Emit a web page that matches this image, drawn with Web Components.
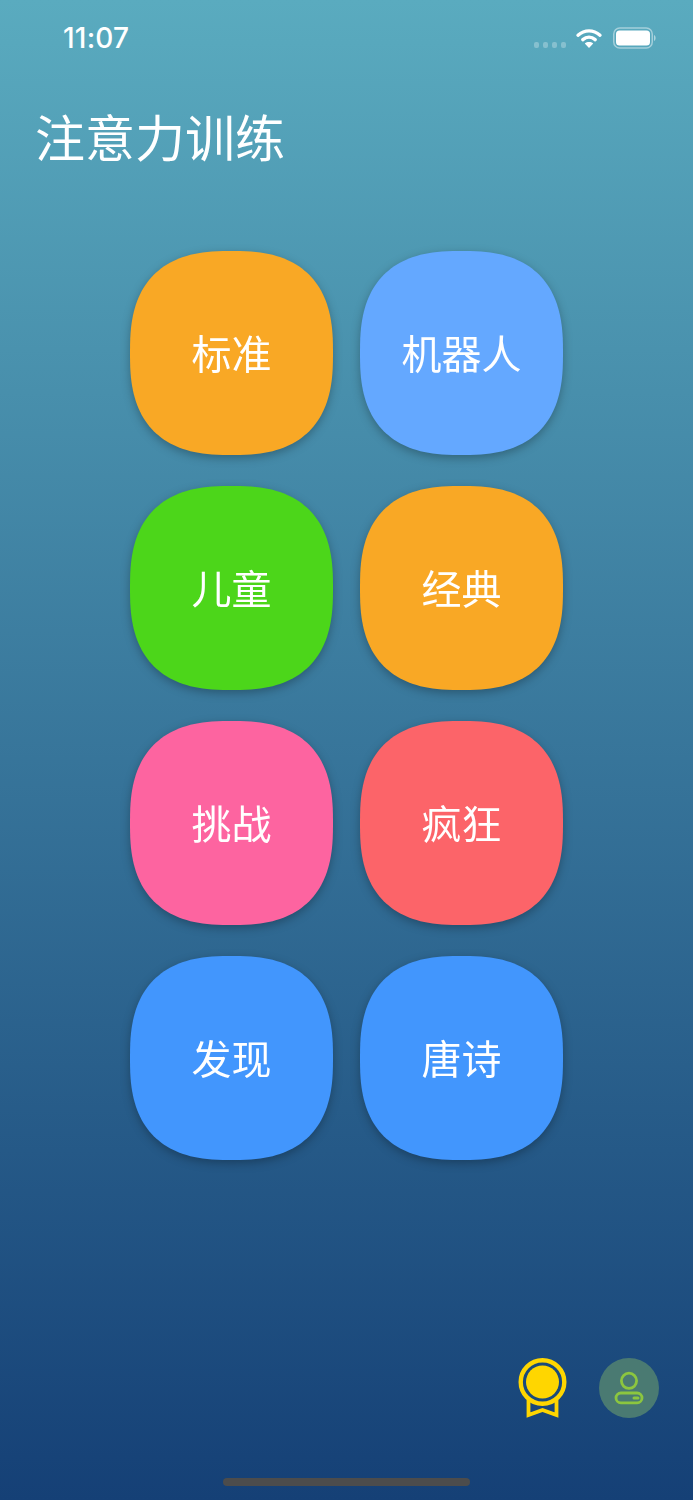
<!DOCTYPE html>
<html lang="zh-CN">
<head>
<meta charset="utf-8">
<title>注意力训练</title>
<style>
  html, body { margin: 0; padding: 0; }
  body { font-family: "Noto Sans CJK SC", "Noto Sans", sans-serif; }
</style>
</head>
<body>
<app-screen>
  <status-bar slot="status" time="11:07"></status-bar>
  <span slot="title">注意力训练</span>
  <mode-tile color="#f9a825">标准</mode-tile>
  <mode-tile color="#64a8ff">机器人</mode-tile>
  <mode-tile color="#4cd61a">儿童</mode-tile>
  <mode-tile color="#f9a825">经典</mode-tile>
  <mode-tile color="#fd64a0">挑战</mode-tile>
  <mode-tile color="#fc6469">疯狂</mode-tile>
  <mode-tile color="#4296fd">发现</mode-tile>
  <mode-tile color="#4296fd">唐诗</mode-tile>
  <medal-button slot="actions"></medal-button>
  <profile-button slot="actions"></profile-button>
</app-screen>

<script>
// tile outline: superellipse, n read off the reference corners
function squirclePath(w, h, n) {
  const pts = [];
  for (let i = 0; i < 160; i++) {
    const a = (i / 160) * Math.PI * 2;
    const c = Math.cos(a), s = Math.sin(a);
    const x = w / 2 + (w / 2) * Math.sign(c) * Math.pow(Math.abs(c), 2 / n);
    const y = h / 2 + (h / 2) * Math.sign(s) * Math.pow(Math.abs(s), 2 / n);
    pts.push(x.toFixed(2) + ' ' + y.toFixed(2));
  }
  return 'M' + pts.join('L') + 'Z';
}

class AppScreen extends HTMLElement {
  connectedCallback() {
    this.attachShadow({ mode: 'open' });
    this.shadowRoot.innerHTML = `
      <style>
        :host {
          display: flex;
          flex-direction: column;
          height: 1500px;
          color: white;
          background: linear-gradient(180deg, #5aabbf 0%, #154076 100%);
          overflow: hidden;
        }
        h1 {
          margin: 28px 0 0 35px;
          font-size: 50px;
          line-height: 62px;
          font-weight: 400;
        }
        .grid {
          display: grid;
          grid-template-columns: 203px 203px;
          grid-auto-rows: 204px;
          column-gap: 27px;
          row-gap: 31px;
          justify-content: center;
          margin-top: 85px;
        }
        .actions {
          display: flex;
          justify-content: flex-end;
          align-items: flex-start;
          gap: 32px;
          margin-top: auto;
          padding-right: 34px;
        }
        .home {
          width: 247px;
          height: 8px;
          border-radius: 4px;
          background: #4c4c4c;
          margin: 60px auto 14px;
        }
      </style>
      <slot name="status"></slot>
      <h1><slot name="title"></slot></h1>
      <div class="grid"><slot></slot></div>
      <div class="actions"><slot name="actions"></slot></div>
      <div class="home"></div>
    `;
  }
}

class StatusBar extends HTMLElement {
  connectedCallback() {
    this.attachShadow({ mode: 'open' });
    this.shadowRoot.innerHTML = `
      <style>
        :host {
          display: flex;
          align-items: center;
          height: 76px;
          padding: 0 37px 0 63px;
          box-sizing: border-box;
          font-family: Inter, "Liberation Sans", sans-serif;
        }
        .time { font-size: 28px; font-weight: 500; color: white; letter-spacing: 0.2px; }
        .right { display: flex; align-items: center; margin-left: auto; }
        .dots { display: flex; gap: 4px; margin: 13px 9px 0 0; }
        .dots i { width: 5px; height: 6px; border-radius: 2px; background: rgba(255,255,255,.28); }
        svg { display: block; }
      </style>
      <span class="time">${this.getAttribute('time')}</span>
      <div class="right">
        <div class="dots"><i></i><i></i><i></i><i></i></div>
        <svg width="28" height="22" viewBox="0 0 26 22" style="margin-right:10px;margin-top:-1px">
          <path d="M2 8.2C8.6 2.4 17.4 2.4 24 8.2" fill="none" stroke="#fff" stroke-width="3.4" stroke-linecap="round"/>
          <path d="M6.8 12.6C10.6 9.4 15.4 9.4 19.2 12.6" fill="none" stroke="#fff" stroke-width="3.4" stroke-linecap="round"/>
          <path d="M13 21L8.8 16.4C11.2 14.6 14.8 14.6 17.2 16.4Z" fill="#fff"/>
        </svg>
        <svg width="43" height="22" viewBox="0 0 43 22">
          <rect x="0.75" y="1" width="38.5" height="20" rx="6" fill="none" stroke="#fff" stroke-opacity=".45" stroke-width="1.5"/>
          <rect x="3" y="3.5" width="34" height="15" rx="3.5" fill="#fff"/>
          <path d="M41 8C42.2 8.6 42.6 9.6 42.6 11C42.6 12.4 42.2 13.4 41 14Z" fill="#fff" fill-opacity=".5"/>
        </svg>
      </div>
    `;
  }
}

class ModeTile extends HTMLElement {
  connectedCallback() {
    this.attachShadow({ mode: 'open' });
    this.shadowRoot.innerHTML = `
      <style>
        :host {
          display: block;
          filter: drop-shadow(0 3px 5px rgba(0,0,0,.28));
        }
        .shape {
          display: flex;
          align-items: center;
          justify-content: center;
          box-sizing: border-box;
          height: 100%;
          padding-bottom: 3px;
          background: ${this.getAttribute('color')};
          clip-path: path("${squirclePath(203, 204, 2.6)}");
          font-size: 40px;
          font-weight: 400;
          color: white;
        }
      </style>
      <div class="shape"><slot></slot></div>
    `;
  }
}

class MedalButton extends HTMLElement {
  connectedCallback() {
    this.attachShadow({ mode: 'open' });
    this.shadowRoot.innerHTML = `
      <style>
        :host { display: block; width: 49px; height: 60px; }
        svg { display: block; }
      </style>
      <svg width="49" height="60" viewBox="0 0 49 60">
        <path d="M10.5 42V57L24.5 52L38.5 57V42" fill="none" stroke="#ffd600" stroke-width="3.8"/>
        <circle cx="24.5" cy="24" r="21.8" fill="#1b4a7c" stroke="#ffd600" stroke-width="4.4"/>
        <circle cx="24.5" cy="24" r="16.5" fill="#ffd600"/>
      </svg>
    `;
  }
}

class ProfileButton extends HTMLElement {
  connectedCallback() {
    this.attachShadow({ mode: 'open' });
    this.shadowRoot.innerHTML = `
      <style>
        :host {
          display: flex;
          align-items: center;
          justify-content: center;
          width: 60px;
          height: 60px;
          border-radius: 50%;
          background: #4a7a72;
        }
        svg { display: block; }
      </style>
      <svg width="32" height="34" viewBox="0 0 32 34" fill="none" stroke="#8cc63f" stroke-width="2.8">
        <circle cx="16" cy="9.8" r="7.6"/>
        <rect x="3" y="22" width="26" height="9.8" rx="4.9"/>
        <path d="M21 26.9H25" stroke-width="3" stroke-linecap="round"/>
      </svg>
    `;
  }
}

customElements.define('app-screen', AppScreen);
customElements.define('status-bar', StatusBar);
customElements.define('mode-tile', ModeTile);
customElements.define('medal-button', MedalButton);
customElements.define('profile-button', ProfileButton);
</script>
</body>
</html>
